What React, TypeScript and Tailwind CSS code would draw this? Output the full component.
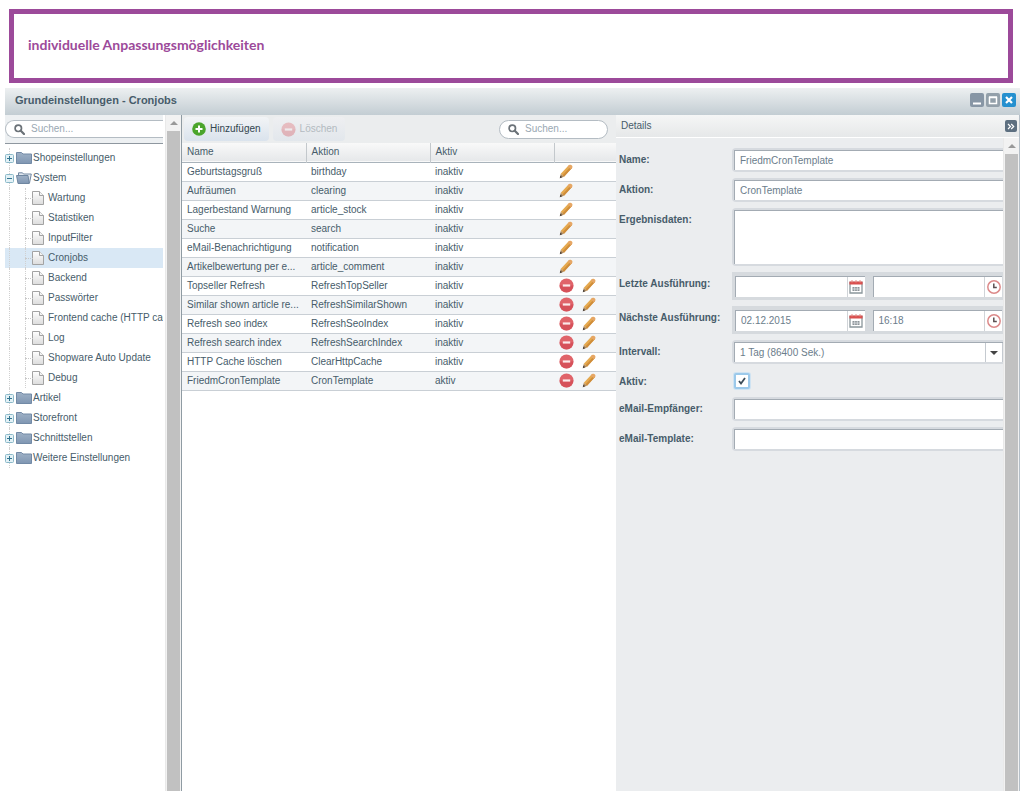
import type { ReactNode } from "react";

type Job = { name: string; action: string; active: string; custom?: boolean };

const jobs: Job[] = [
  { name: "Geburtstagsgruß", action: "birthday", active: "inaktiv" },
  { name: "Aufräumen", action: "clearing", active: "inaktiv" },
  { name: "Lagerbestand Warnung", action: "article_stock", active: "inaktiv" },
  { name: "Suche", action: "search", active: "inaktiv" },
  { name: "eMail-Benachrichtigung", action: "notification", active: "inaktiv" },
  { name: "Artikelbewertung per e...", action: "article_comment", active: "inaktiv" },
  { name: "Topseller Refresh", action: "RefreshTopSeller", active: "inaktiv", custom: true },
  { name: "Similar shown article re...", action: "RefreshSimilarShown", active: "inaktiv", custom: true },
  { name: "Refresh seo index", action: "RefreshSeoIndex", active: "inaktiv", custom: true },
  { name: "Refresh search index", action: "RefreshSearchIndex", active: "inaktiv", custom: true },
  { name: "HTTP Cache löschen", action: "ClearHttpCache", active: "inaktiv", custom: true },
  { name: "FriedmCronTemplate", action: "CronTemplate", active: "aktiv", custom: true },
];

const systemItems = [
  "Wartung",
  "Statistiken",
  "InputFilter",
  "Cronjobs",
  "Backend",
  "Passwörter",
  "Frontend cache (HTTP cac",
  "Log",
  "Shopware Auto Update",
  "Debug",
];

const SearchIcon = () => (
  <svg width="11" height="11" viewBox="0 0 11 11" className="shrink-0" fill="none" stroke="#6b7278">
    <circle cx="4.3" cy="4.3" r="3.2" strokeWidth="1.7" />
    <path d="M6.8 6.8L10 10" strokeWidth="2.2" strokeLinecap="round" />
  </svg>
);

const PlusIcon = () => (
  <svg width="14" height="14" viewBox="0 0 14 14">
    <circle cx="7" cy="7" r="6.8" fill="#4ba52c" />
    <path d="M7 3.5v7M3.5 7h7" stroke="#fff" strokeWidth="2" />
  </svg>
);

const MinusIcon = () => (
  <svg width="15" height="15" viewBox="0 0 15 15">
    <circle cx="7.5" cy="7.5" r="7" fill="#e0646a" />
    <path d="M.5 7.5a7 7 0 0 0 14 0z" fill="#cf4550" opacity="0.6" />
    <path d="M3.8 7.5h7.4" stroke="#fbe9ea" strokeWidth="2.2" />
  </svg>
);

const PencilIcon = () => (
  <svg width="14" height="15" viewBox="0 0 14 15">
    <path d="M1.8 9.7L9.800 1.300Q11 .2 12.600 1.400Q14 2.700 13 4L5 12.700z" fill="#e5a94f" />
    <path d="M3.600 11.300L11.800 2.600L13 4L5 12.700z" fill="#cf8d3a" />
    <path d="M9.800 1.300Q11 .2 12.600 1.400Q14 2.700 13 4L11.800 5.200L8.600 2.500z" fill="#e6a666" />
    <path d="M1.800 9.700L5 12.700L.8 14.200z" fill="#b08a5c" />
    <path d="M1.300 11.600L3.200 13.300L.8 14.200z" fill="#4d4540" />
  </svg>
);

const FolderIcon = ({ open }: { open?: boolean }) => (
  <svg width="16" height="12" viewBox="0 0 16 12" className="shrink-0">
    <defs>
      <linearGradient id="folder" x1="0" y1="0" x2="0" y2="1">
        <stop offset="0" stopColor="#9fb1c6" />
        <stop offset="1" stopColor="#7f96b2" />
      </linearGradient>
    </defs>
    {open ? (
      <>
        <path d="M2.5 10V.8h4l1 1.200h7.800L13.500 11z" fill="#dfe6ee" stroke="#7288a1" />
        <path d="M.5 3.500h11.500l1.200 8H2z" fill="url(#folder)" stroke="#6f86a0" />
      </>
    ) : (
      <path d="M.5 11.5V.5h5l1.500 1.500h8.500v9.500z" fill="url(#folder)" stroke="#728aa6" />
    )}
  </svg>
);

const FileIcon = () => (
  <svg width="12" height="14" viewBox="0 0 12 14" className="shrink-0">
    <defs>
      <linearGradient id="file" x1="0" y1="0" x2="0" y2="1">
        <stop offset="0" stopColor="#fff" />
        <stop offset="1" stopColor="#dcdcdc" />
      </linearGradient>
    </defs>
    <path d="M.5 .5h7l4 4v9H.5z" fill="url(#file)" stroke="#a3a3a3" />
    <path d="M7.500 .5v4h4" fill="#f4f4f4" stroke="#a3a3a3" />
  </svg>
);

const Expander = ({ open }: { open?: boolean }) => (
  <svg width="9" height="9" viewBox="0 0 9 9" className="z-10 shrink-0">
    <rect x=".5" y=".5" width="8" height="8" rx="1" fill="#e3f1f6" stroke="#8bb9c9" />
    <path d={open ? "M2 4.500h5" : "M2 4.500h5M4.500 2v5"} stroke="#33758f" />
  </svg>
);

const CalendarIcon = () => (
  <svg width="14" height="14" viewBox="0 0 14 14">
    <path d="M1 2.500h12v10.500H1z" fill="#fff" stroke="#8b979c" strokeWidth="1.3" />
    <path d="M.4 1.500h13.200v3H.4z" fill="#d9504f" />
    <path d="M3 0v2.500M7 0v2.500M11 0v2.500" stroke="#e98c88" />
    <path d="M3.500 7h7v4h-7z" fill="#8d9499" />
    <path d="M5.700 7v4M8.300 7v4M3.500 9h7" stroke="#e7eaec" strokeWidth=".7" />
  </svg>
);

const ClockIcon = () => (
  <svg width="14" height="14" viewBox="0 0 14 14" fill="none">
    <circle cx="7" cy="7" r="6.200" fill="#fff" stroke="#dc8a8a" strokeWidth="1.500" />
    <path d="M6.800 3.500v4h3" stroke="#5b5052" strokeWidth="1.500" />
  </svg>
);

const Scrollbar = () => (
  <div className="flex w-4 shrink-0 flex-col border-l border-[#e9e9e9] bg-[#f2f2f2]">
    <div className="flex h-4 shrink-0 items-center justify-center">
      <svg width="8" height="4" viewBox="0 0 8 4">
        <path d="M0 4L4 0l4 4z" fill="#999" />
      </svg>
    </div>
    <div className="mr-px ml-px flex-1 bg-[#c1c1c1]" />
  </div>
);

const TreeFolder = ({ label, open }: { label: string; open?: boolean }) => (
  <button type="button" className="relative flex h-5 w-full items-center whitespace-nowrap">
    <span className="absolute top-0 left-1 h-full border-l border-dotted border-[#d0d0d0]" />
    <Expander open={open} />
    <span className="ml-0.5 flex">
      <FolderIcon open={open} />
    </span>
    <span className="ml-px">{label}</span>
  </button>
);

const TreeItem = ({ label }: { label: string }) => (
  <button
    type="button"
    className={`relative flex h-5 w-full items-center pl-[27px] whitespace-nowrap ${
      label === "Cronjobs" ? "bg-[#d9e8f5]" : ""
    }`}
  >
    <span className="absolute top-0 left-1 h-full border-l border-dotted border-[#d0d0d0]" />
    <span className="absolute top-0 left-5 h-full border-l border-dotted border-[#d0d0d0]" />
    <span className="absolute top-1/2 left-5 w-2 border-t border-dotted border-[#c8c8c8]" />
    <FileIcon />
    <span className="ml-1">{label}</span>
  </button>
);

const Row = ({ id, label, children }: { id: string; label: string; children: ReactNode }) => (
  <div className="flex items-start">
    <label htmlFor={id} className="h-5 w-[113px] shrink-0 leading-6 font-bold whitespace-nowrap text-[#475c6a]">
      {label}
    </label>
    <div className="min-w-0 flex-1">{children}</div>
  </div>
);

// grey halo round a white box, open to the right
const frame = "border-2 border-r-0 border-[#d6dadf] rounded-l-sm";
const inner = "border-t border-l border-[#a3abb3] bg-white";
const field = "block w-full min-w-0 bg-white px-[5px] text-[#6b7d8b] outline-none";

const TextField = ({ id, label, value }: { id: string; label: string; value?: string }) => (
  <Row id={id} label={label}>
    <div className={frame}>
      <div className={inner}>
        <input id={id} type="text" defaultValue={value} className={`${field} h-[19px]`} />
      </div>
    </div>
  </Row>
);

const DateTimeField = ({ id, label, date, time }: { id: string; label: string; date?: string; time?: string }) => (
  <Row id={id} label={label}>
    <div className="flex h-7 items-center gap-2 bg-[#d6dade] pr-px pl-[3px]">
      <div className={`${inner} flex h-[21px] min-w-0 flex-1`}>
        <input id={id} type="text" defaultValue={date} className={field} />
        <button type="button" aria-label="Datum" className="flex w-[18px] shrink-0 items-center justify-center border-l border-[#d0d4d8]">
          <CalendarIcon />
        </button>
      </div>
      <div className={`${inner} flex h-[21px] min-w-0 flex-1`}>
        <input type="text" aria-label="Uhrzeit" defaultValue={time} className={field} />
        <button type="button" aria-label="Uhrzeit" className="flex w-[18px] shrink-0 items-center justify-center border-l border-[#d0d4d8]">
          <ClockIcon />
        </button>
      </div>
    </div>
  </Row>
);

const Sidebar = () => (
  <aside className="flex w-[177px] shrink-0 border-r border-[#8f9ba3] bg-white">
    <div className="min-w-0 flex-1 overflow-hidden">
      <div className="flex h-[29px] items-center border-b border-[#8e979f] bg-[#edf0f2]">
        <label className="flex h-[18px] w-full items-center gap-1.5 rounded-l-full border border-r-0 border-[#b4bcc3] bg-white pl-2">
          <SearchIcon />
          <input type="search" aria-label="Suchen" placeholder="Suchen..." className="w-full min-w-0 outline-none placeholder:text-[#9aa8b3]" />
        </label>
      </div>
      <nav className="pt-1">
        <TreeFolder label="Shopeinstellungen" />
        <TreeFolder label="System" open />
        {systemItems.map((item) => (
          <TreeItem key={item} label={item} />
        ))}
        <TreeFolder label="Artikel" />
        <TreeFolder label="Storefront" />
        <TreeFolder label="Schnittstellen" />
        <TreeFolder label="Weitere Einstellungen" />
      </nav>
    </div>
    <div className="ml-0.5 flex">
      <Scrollbar />
    </div>
  </aside>
);

const JobList = () => (
  <main className="min-w-0 flex-1 bg-white">
    <div className="flex h-7 items-center justify-between bg-[#ebedee] pr-2 pl-0.5">
      <div className="flex gap-1">
        <button type="button" className="flex h-6 items-center gap-1 rounded-sm bg-linear-to-b from-[#f2f4f6] to-[#dae3ed] px-2 text-[#33464f]">
          <PlusIcon />
          Hinzufügen
        </button>
        <button type="button" disabled className="flex h-6 items-center gap-1 rounded-sm bg-linear-to-b from-[#eeeff1] to-[#e2e7ec] px-2 text-[#b3bac0]">
          <span className="opacity-35">
            <MinusIcon />
          </span>
          Löschen
        </button>
      </div>
      <label className="flex h-[19px] w-[109px] items-center gap-1.5 rounded-full border border-[#b4bcc3] bg-white px-2">
        <SearchIcon />
        <input type="search" aria-label="Suchen" placeholder="Suchen..." className="w-full min-w-0 outline-none placeholder:text-[#9aa8b3]" />
      </label>
    </div>
    <table className="w-full table-fixed border-collapse text-left">
      <colgroup>
        <col />
        <col />
        <col />
        <col className="w-[62px]" />
      </colgroup>
      <thead>
        <tr className="h-[19px] border-b border-[#a9b3bb] bg-linear-to-b from-[#f9f9f9] to-[#e6e8ea]">
          <th className="border-r border-[#c3c8cc] px-[5px] py-0 font-normal">Name</th>
          <th className="border-r border-[#c3c8cc] px-[5px] py-0 font-normal">Aktion</th>
          <th className="border-r border-[#c3c8cc] px-[5px] py-0 font-normal">Aktiv</th>
          <th aria-label="Optionen" className="p-0" />
        </tr>
      </thead>
      <tbody>
        {jobs.map((job) => (
          <tr key={job.action} className="h-[19px] border-b border-[#c9cfd5] even:bg-[#f3f5f7]">
            <td className="truncate px-[5px] py-0">{job.name}</td>
            <td className="truncate px-[5px] py-0">{job.action}</td>
            <td className="px-[5px] py-0">{job.active}</td>
            <td className="p-0">
              <div className="flex items-center gap-2 pl-[5px]">
                {job.custom && (
                  <button type="button" aria-label="Löschen">
                    <MinusIcon />
                  </button>
                )}
                <button type="button" aria-label="Bearbeiten">
                  <PencilIcon />
                </button>
              </div>
            </td>
          </tr>
        ))}
      </tbody>
    </table>
  </main>
);

const Details = () => (
  <section className="flex w-[404px] shrink-0 flex-col border-r border-[#b5bfc8] bg-[#ebedef]">
    <div className="flex h-[23px] shrink-0 items-center justify-between border-b border-white bg-linear-to-b from-[#f5f6f6] to-[#e6e8e9] pr-0.5 pl-[5px]">
      <h2>Details</h2>
      <button type="button" aria-label="Einklappen" className="flex size-3 items-center justify-center rounded-xs bg-[#5d6f80]">
        <svg width="8" height="7" viewBox="0 0 8 7" fill="none" stroke="#fff" strokeWidth="1.200">
          <path d="M1 1l2.500 2.500L1 6M4.200 1l2.500 2.500L4.200 6" />
        </svg>
      </button>
    </div>
    <div className="flex min-h-0 flex-1">
      <form className="flex min-w-0 flex-1 flex-col gap-1.5 pt-2.5 pl-[3px]">
        <TextField id="name" label="Name:" value="FriedmCronTemplate" />
        <TextField id="action" label="Aktion:" value="CronTemplate" />
        <Row id="result" label="Ergebnisdaten:">
          <div className={frame}>
            <div className={inner}>
              <textarea id="result" className={`${field} h-[53px] resize-none`} />
            </div>
          </div>
        </Row>
        <DateTimeField id="last" label="Letzte Ausführung:" />
        <DateTimeField id="next" label="Nächste Ausführung:" date="02.12.2015" time="16:18" />
        <Row id="interval" label="Intervall:">
          <div className={frame}>
            <div className={`${inner} flex h-5`}>
              <select id="interval" className={`${field} appearance-none`}>
                <option>1 Tag (86400 Sek.)</option>
              </select>
              <span className="pointer-events-none flex w-[18px] shrink-0 items-center justify-center border-x border-[#c5cad0]">
                <svg width="8" height="4" viewBox="0 0 8 4">
                  <path d="M0 0h8L4 4z" fill="#444" />
                </svg>
              </span>
            </div>
          </div>
        </Row>
        <Row id="active" label="Aktiv:">
          <div className="flex h-[21px] items-center pl-0.5">
            <span className="relative flex">
              <input
                id="active"
                type="checkbox"
                defaultChecked
                className="peer size-4 appearance-none rounded-xs border-2 border-[#9cc9ea] bg-white ring-1 ring-[#cfe3f2]"
              />
              <svg width="8" height="8" viewBox="0 0 8 8" className="pointer-events-none absolute top-1 left-1 hidden peer-checked:block">
                <path d="M1 4l2 2.500L7 1" fill="none" stroke="#3c4c58" strokeWidth="1.800" />
              </svg>
            </span>
          </div>
        </Row>
        <TextField id="recipient" label="eMail-Empfänger:" />
        <TextField id="template" label="eMail-Template:" />
      </form>
      <Scrollbar />
    </div>
  </section>
);

const App = () => {
  return (
    <div className="flex h-screen flex-col overflow-hidden bg-white font-['Liberation_Sans',Arial,sans-serif] text-[10px] leading-4 text-[#475c6a]">
      <header className="mt-[9px] mr-[7px] mb-[5px] ml-[9px] flex h-[74px] shrink-0 items-center border-5 border-[#9c4a9a] pb-0.5 pl-3.5">
        <h1 className="font-['Lato',sans-serif] text-[14px] font-bold text-[#9c4a9a]">
          individuelle Anpassungsmöglichkeiten
        </h1>
      </header>
      <div className="ml-[5px] flex min-h-0 flex-1 flex-col">
        <div className="flex h-[27px] shrink-0 items-center justify-between bg-linear-to-b from-[#edf0f1] to-[#c3cdd3] pr-1 pb-1 pl-2.5">
          <h2 className="text-[11px] font-bold text-[#475c6a]">Grundeinstellungen - Cronjobs</h2>
          <div className="flex gap-0.5">
            <button type="button" aria-label="Minimieren" className="size-3.5 rounded-xs bg-[#8796a5]">
              <svg viewBox="0 0 14 14">
                <path d="M3 10.500h8" stroke="#fff" strokeWidth="2" />
              </svg>
            </button>
            <button type="button" aria-label="Maximieren" className="size-3.5 rounded-xs bg-[#93a0aa]">
              <svg viewBox="0 0 14 14">
                <path d="M3.500 4.500h7v6h-7zM3 4h8" fill="none" stroke="#fff" strokeWidth="1.500" />
              </svg>
            </button>
            <button type="button" aria-label="Schließen" className="size-3.5 rounded-xs bg-[#2590cf]">
              <svg viewBox="0 0 14 14">
                <path d="M4 4l6 6M10 4l-6 6" stroke="#fff" strokeWidth="2.200" />
              </svg>
            </button>
          </div>
        </div>
        <div className="flex min-h-0 flex-1">
          <Sidebar />
          <JobList />
          <Details />
        </div>
      </div>
    </div>
  );
};

export default App;
